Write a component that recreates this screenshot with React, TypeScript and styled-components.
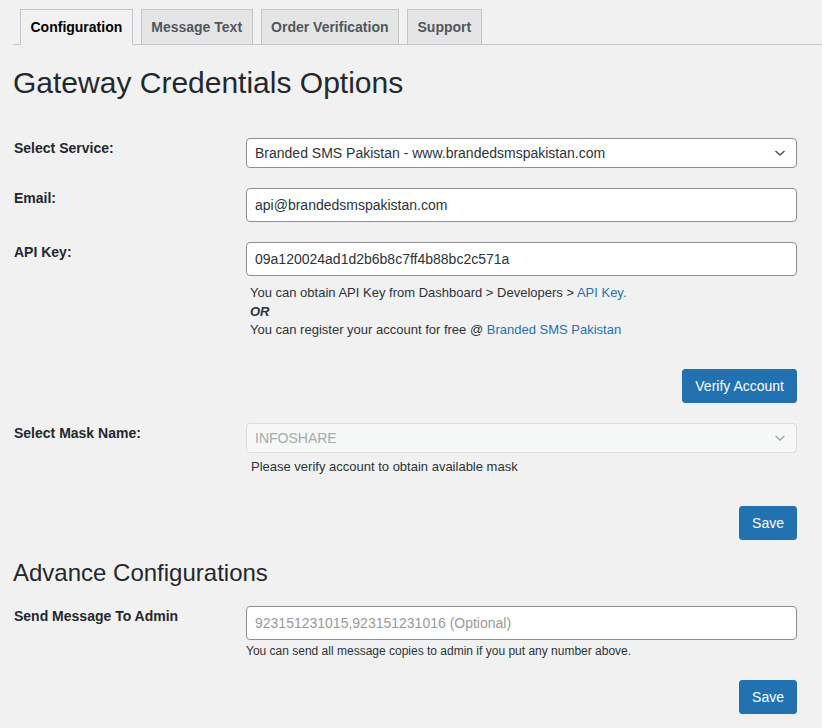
import React from "react";
import styled, { createGlobalStyle } from "styled-components";

const GlobalStyle = createGlobalStyle`
  body {
    margin: 0;
    background: #f1f1f1;
    font-family: "Liberation Sans", Arial, sans-serif;
    color: #3c434a;
  }
`;

const Wrap = styled.div`
  padding-left: 13px;
`;

const TabBar = styled.nav`
  display: flex;
  gap: 8px;
  padding: 9px 0 0 7px;
  border-bottom: 1px solid #c3c4c7;
`;

const Tab = styled.a<{ $active?: boolean }>`
  display: block;
  margin-bottom: -1px;
  padding: 5px 9.5px;
  font-size: 14px;
  font-weight: 700;
  line-height: 24px;
  border: 1px solid #c3c4c7;
  border-bottom-color: ${({ $active }) => ($active ? "#f1f1f1" : "#c3c4c7")};
  background: ${({ $active }) => ($active ? "#f1f1f1" : "#e5e5e5")};
  color: ${({ $active }) => ($active ? "#000" : "#50575e")};
  text-decoration: none;
  cursor: pointer;
`;

const Content = styled.div`
  padding-right: 25px;
`;

const Title = styled.h1`
  margin: 18px 0 36px;
  font-size: 30px;
  font-weight: 400;
  line-height: 39px;
  color: #23282d;
`;

const SubTitle = styled.h2`
  margin: 17px 0 18px;
  font-size: 24px;
  font-weight: 400;
  line-height: 31px;
  color: #23282d;
`;

const Row = styled.div<{ $gap?: number }>`
  display: grid;
  grid-template-columns: 233px 1fr;
  margin-bottom: ${({ $gap }) => $gap ?? 20}px;
`;

const Label = styled.label<{ $pad: number }>`
  padding: ${({ $pad }) => $pad}px 0 0 1px;
  font-size: 14px;
  font-weight: 700;
  line-height: 1.3;
  color: #23282d;
`;

const Field = styled.div`
  display: flex;
  flex-direction: column;
`;

const Input = styled.input`
  box-sizing: border-box;
  width: 100%;
  height: 34px;
  margin: 0;
  padding: 0 8px;
  border: 1px solid #8c8f94;
  border-radius: 4px;
  background: #fff;
  font-family: inherit;
  font-size: 14px;
  color: #2c3338;
  outline: none;

  &::placeholder {
    color: #999;
  }
`;

const Select = styled.div<{ $disabled?: boolean }>`
  box-sizing: border-box;
  display: flex;
  align-items: center;
  justify-content: space-between;
  height: 30px;
  padding: 0 8px;
  border: 1px solid ${({ $disabled }) => ($disabled ? "#dcdcde" : "#8c8f94")};
  border-radius: 4px;
  background: ${({ $disabled }) => ($disabled ? "#f6f7f7" : "#fff")};
  font-size: 14px;
  color: ${({ $disabled }) => ($disabled ? "#a7aaad" : "#2c3338")};

  svg {
    flex: none;
    margin-right: 2px;
    color: ${({ $disabled }) => ($disabled ? "#a7aaad" : "#50575e")};
  }
`;

const Help = styled.div<{ $indent: number; $top: number; $size?: number }>`
  margin-top: ${({ $top }) => $top}px;
  padding-left: ${({ $indent }) => $indent}px;
  font-size: ${({ $size }) => $size ?? 13}px;
  line-height: ${({ $size }) => (($size ?? 13) === 13 ? 18.5 : 17)}px;
  color: #2c3338;

  a {
    color: #2271b1;
    text-decoration: none;
  }

  em {
    display: block;
    font-weight: 700;
  }
`;

const Actions = styled.div<{ $top: number }>`
  display: flex;
  justify-content: flex-end;
  margin-top: ${({ $top }) => $top}px;
`;

const Button = styled.button`
  box-sizing: border-box;
  height: 34px;
  padding: 0 12px;
  border: 1px solid #2271b1;
  border-radius: 3px;
  background: #2271b1;
  font-family: inherit;
  font-size: 14px;
  color: #fff;
  cursor: pointer;
`;

const Chevron = () => (
  <svg width="12" height="8" viewBox="0 0 12 8" fill="none">
    <path d="M1.5 2 L6 6 L10.5 2" stroke="currentColor" strokeWidth="1.6" />
  </svg>
);

export default function App() {
  return (
    <>
      <GlobalStyle />
      <Wrap>
        <TabBar>
          <Tab $active>Configuration</Tab>
          <Tab>Message Text</Tab>
          <Tab>Order Verification</Tab>
          <Tab>Support</Tab>
        </TabBar>
        <Content>
          <Title>Gateway Credentials Options</Title>

          <Row>
            <Label $pad={1}>Select Service:</Label>
            <Select role="combobox">
              <span>Branded SMS Pakistan - www.brandedsmspakistan.com</span>
              <Chevron />
            </Select>
          </Row>

          <Row>
            <Label $pad={1}>Email:</Label>
            <Input defaultValue="api@brandedsmspakistan.com" />
          </Row>

          <Row $gap={0}>
            <Label $pad={1}>API Key:</Label>
            <Field>
              <Input defaultValue="09a120024ad1d2b6b8c7ff4b88bc2c571a" />
              <Help $indent={4} $top={8}>
                You can obtain API Key from Dashboard &gt; Developers &gt;{" "}
                <a href="#">API Key.</a>
                <em>OR</em>
                You can register your account for free @{" "}
                <a href="#">Branded SMS Pakistan</a>
              </Help>
            </Field>
          </Row>

          <Actions $top={29}>
            <Button>Verify Account</Button>
          </Actions>

          <Row $gap={0} style={{ marginTop: 20 }}>
            <Label $pad={1}>Select Mask Name:</Label>
            <Field>
              <Select $disabled role="combobox">
                <span>INFOSHARE</span>
                <Chevron />
              </Select>
              <Help $indent={5} $top={5}>
                Please verify account to obtain available mask
              </Help>
            </Field>
          </Row>

          <Actions $top={30}>
            <Button>Save</Button>
          </Actions>

          <SubTitle>Advance Configurations</SubTitle>

          <Row $gap={0}>
            <Label $pad={1}>Send Message To Admin</Label>
            <Field>
              <Input placeholder="923151231015,923151231016 (Optional)" />
              <Help $indent={0} $top={3} $size={12}>
                You can send all message copies to admin if you put any number
                above.
              </Help>
            </Field>
          </Row>

          <Actions $top={20}>
            <Button>Save</Button>
          </Actions>
        </Content>
      </Wrap>
    </>
  );
}
